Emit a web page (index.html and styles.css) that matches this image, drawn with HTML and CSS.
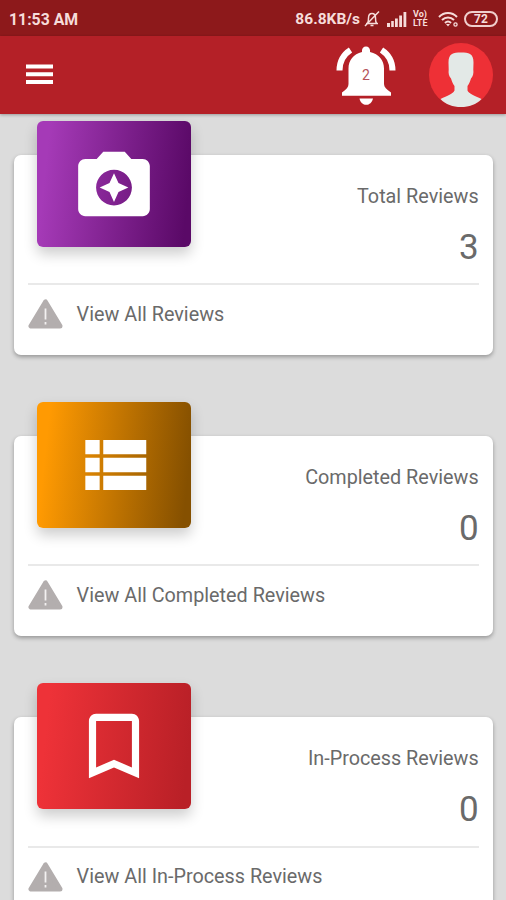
FILE: index.html
```html
<!DOCTYPE html>
<html lang="en">
<head>
<meta charset="utf-8">
<title>Reviews</title>
<link rel="stylesheet" href="styles.css">
</head>
<body>
<div class="status">
  <span class="time">11:53 AM</span>
  <div class="indicators">
    <span class="speed">86.8KB/s</span>
    <svg class="mute" width="16" height="18" viewBox="0 0 16 18" fill="none" stroke="currentColor" stroke-width="1.5"><path d="M2 13.5h12M3.5 13c1-1 1-2 1-5 0-3 1.500-4.500 3.500-4.500s3.500 1.500 3.500 4.500c0 3 0 4 1 5M6.500 15.500h3M15 1.500L1 16"/></svg>
    <svg class="signal" width="20" height="15" viewBox="0 0 20 15" fill="currentColor"><path d="M0 11h3v4H0zM4.200 9h2.600v6H4.200zM8 6.500h2.800V15H8zM12.200 3.500H15V15h-2.800zM16.500 0h2.800v15h-2.800z"/></svg>
    <span class="lte"><span>Vo)</span><span>LTE</span></span>
    <svg class="wifi" width="21" height="17" viewBox="0 0 21 17" fill="none" stroke="currentColor" stroke-width="2"><path d="M1 6c5-5.300 13-5.300 18 0M4 9c3.500-3.500 8.500-3.500 12 0M7 12c1.800-1.800 4.200-1.800 6 0"/><path d="M8 13l2 2.500 2-2.500z" fill="currentColor" stroke="none"/><circle cx="17.500" cy="13.500" r="1.600" stroke-width="1.300"/></svg>
    <span class="battery">72</span>
  </div>
</div>
<header class="bar">
  <svg class="menu" width="27" height="21" viewBox="0 0 27 21" fill="#fff"><path d="M0 .5h27v4H0zM0 8.300h27v4H0zM0 16.100h27v4H0z"/></svg>
  <div class="actions">
    <div class="bell">
      <svg width="60" height="60" viewBox="0 0 60 60"><g fill="#fff"><path d="M30 1.500c-2.500 0-4 1.700-4 4V7C17.500 9 12.500 15.500 12.500 23.500v15.500c0 3-2 5.500-6.500 8.500v3.200h49v-3.200c-4.500-3-7-5.500-7-8.500V23.500c0-8-5-14.500-14-16.500V5.500c0-2.300-1.500-4-4-4zM23.500 53.500h13.500c-1 4-3.500 6.300-6.700 6.300s-6-2.300-6.800-6.300z"/></g><path d="M14.500 5C7.500 9.500 3.500 16.500 3.500 25.500M45.500 5C52.500 9.500 56.500 16.500 56.500 25.500" fill="none" stroke="#fff" stroke-width="6"/></svg>
      <span class="count">2</span>
    </div>
    <svg class="avatar" width="64" height="64" viewBox="0 0 64 64"><circle cx="32" cy="32" r="32" fill="#ee3036"/><path d="M32 9.500c-4 0-7 .3-9 1.500-2.500 1.500-3.500 4-3.500 8.500l.2 7c-.5 4 .3 7 2.300 9 1 3.500 2 5.500 3.500 7.500v4.500c-1.500 3.500-7 5-14 8.500C16.500 61.500 24 64 32 64s15.500-2.500 20.500-8c-7-3.500-12.500-5-14-8.500V43c1.500-2 2.500-4 3.500-7.500 2-2 2.800-5 2.300-9l.2-7c0-4.500-1-7-3.500-8.500-2-1.200-5-1.500-9-1.500z" fill="#e3e9e7"/></svg>
  </div>
</header>
<main class="list">
  <section class="card">
    <div class="top">
      <div class="tile purple"><svg width="86" height="86" viewBox="0 0 24 24" fill="#fff"><path d="M9 3L7.170 5H4c-1.100 0-2 .9-2 2v12c0 1.100.9 2 2 2h16c1.100 0 2-.9 2-2V7c0-1.100-.9-2-2-2h-3.170L15 3H9zm3 15c-2.760 0-5-2.240-5-5s2.240-5 5-5 5 2.240 5 5-2.240 5-5 5zm0-1l1.250-2.750L16 13l-2.750-1.250L12 9l-1.250 2.750L8 13l2.750 1.250z"/></svg></div>
      <div class="stat"><span class="label">Total Reviews</span><span class="value">3</span></div>
    </div>
    <div class="link"><svg width="35" height="30" viewBox="0 0 35 30"><path d="M17.500 3L3 27h29z" fill="#b3aeae" stroke="#b3aeae" stroke-width="5" stroke-linejoin="round"/><path d="M17.500 9.500v11M17.500 23v2.500" stroke="#f3f1f1" stroke-width="1.800"/></svg><span class="text">View All Reviews</span></div>
  </section>
  <section class="card">
    <div class="top">
      <div class="tile orange"><svg width="86" height="86" viewBox="0 0 24 24" fill="#fff"><path d="M4 14h4v-4H4v4zm0 5h4v-4H4v4zM4 9h4V5H4v4zm5 5h12v-4H9v4zm0 5h12v-4H9v4zM9 5v4h12V5H9z"/></svg></div>
      <div class="stat"><span class="label">Completed Reviews</span><span class="value">0</span></div>
    </div>
    <div class="link"><svg width="35" height="30" viewBox="0 0 35 30"><path d="M17.500 3L3 27h29z" fill="#b3aeae" stroke="#b3aeae" stroke-width="5" stroke-linejoin="round"/><path d="M17.500 9.500v11M17.500 23v2.500" stroke="#f3f1f1" stroke-width="1.800"/></svg><span class="text">View All Completed Reviews</span></div>
  </section>
  <section class="card">
    <div class="top">
      <div class="tile red"><svg width="86" height="86" viewBox="0 0 24 24" fill="#fff"><path d="M17 3H7c-1.100 0-2 .9-2 2v16l7-3 7 3V5c0-1.100-.9-2-2-2zm0 15l-5-2.180L7 18V5h10v13z"/></svg></div>
      <div class="stat"><span class="label">In-Process Reviews</span><span class="value">0</span></div>
    </div>
    <div class="link"><svg width="35" height="30" viewBox="0 0 35 30"><path d="M17.500 3L3 27h29z" fill="#b3aeae" stroke="#b3aeae" stroke-width="5" stroke-linejoin="round"/><path d="M17.500 9.500v11M17.500 23v2.500" stroke="#f3f1f1" stroke-width="1.800"/></svg><span class="text">View All In-Process Reviews</span></div>
  </section>
</main>
</body>
</html>
```

FILE: styles.css
```css
* { box-sizing: border-box; }
body {
  margin: 0;
  height: 900px;
  overflow: hidden;
  background: #dcdcdc;
  color: #6a6a6a;
  font-family: Roboto, "Liberation Sans", sans-serif;
}
svg { display: block; flex: none; }

.status {
  display: flex;
  align-items: center;
  justify-content: space-between;
  height: 36px;
  padding: 2px 8px 0 9px;
  background: #8d191b;
  color: #f6dcda;
}
.time { font-size: 15.800px; font-weight: 700; }
.indicators { display: flex; align-items: center; }
.speed { font-size: 15.500px; font-weight: 700; margin-right: 4px; }
.mute { margin-right: 7px; }
.signal { margin-right: 6px; }
.lte {
  display: flex;
  flex-direction: column;
  width: 18px;
  margin-right: 7px;
  font-size: 9px;
  line-height: 9px;
  font-weight: 700;
}
.wifi { margin-right: 5px; }
.battery {
  width: 34px;
  height: 16px;
  border: 2px solid #f0cfcd;
  border-radius: 8px;
  font-size: 12px;
  line-height: 12px;
  font-weight: 700;
  text-align: center;
}

.bar {
  position: relative;
  display: flex;
  align-items: center;
  justify-content: space-between;
  height: 78px;
  padding: 0 13px 0 26px;
  background: #b42027;
  box-shadow: 0 1px 3px rgba(0, 0, 0, .3);
}
.menu { margin-top: -2px; }
.actions { display: flex; align-items: center; gap: 33px; }
.bell { position: relative; }
.count {
  position: absolute;
  inset: 21px 0 auto;
  color: #b5525a;
  font-size: 14px;
  line-height: 18px;
  text-align: center;
}

.list {
  display: flex;
  flex-direction: column;
  gap: 80.800px;
  padding: 40.600px 13.400px 0 14.100px;
}
.card {
  flex: none;
  height: 200.500px;
  padding: 0 14px;
  border-radius: 7px;
  background: #fff;
  box-shadow: 0 2px 4px rgba(0, 0, 0, .32);
}
.top {
  display: flex;
  justify-content: space-between;
  height: 130.500px;
  padding-left: 8.500px;
  border-bottom: 2px solid #e9e9e9;
}
.tile {
  display: flex;
  align-items: center;
  justify-content: center;
  width: 154px;
  height: 126px;
  margin-top: -34px;
  border-radius: 6px;
  box-shadow: 0 7px 14px rgba(0, 0, 0, .2);
}
.purple { background: linear-gradient(96deg, #a53ab7 8%, #5a0967 95%); }
.orange { background: linear-gradient(96deg, #ff9a02 8%, #855000 95%); }
.red { background: linear-gradient(96deg, #ee3238 8%, #b92027 95%); }
.stat {
  display: flex;
  flex-direction: column;
  align-items: flex-end;
  padding-top: 30px;
}
.label { font-size: 19.800px; line-height: 24px; }
.value { font-size: 35px; line-height: 40px; margin-top: 19px; }
.link { display: flex; align-items: center; height: 58px; gap: 13.500px; }
.text { font-size: 19.800px; line-height: 24px; margin-top: 1px; }
```
